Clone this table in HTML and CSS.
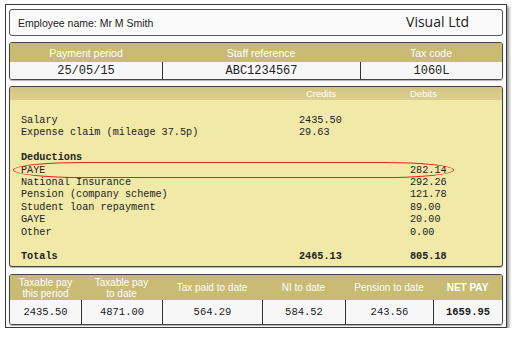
FILE: index.html
```html
<!DOCTYPE html>
<html lang="en">
<head>
    <title>Payslip</title>
    <link rel="stylesheet" href="styles.css">
</head>
<body>
    <div class="slip">
        <div class="s_name">
            <span>Employee name: Mr M Smith</span>
            <span class="s_company">Visual Ltd</span>
        </div>

        <div class="s_box s_info">
            <div class="s_head">Payment period</div>
            <div class="s_head">Staff reference</div>
            <div class="s_head">Tax code</div>
            <div class="s_cell">25/05/15</div>
            <div class="s_cell">ABC1234567</div>
            <div class="s_cell">1060L</div>
        </div>

        <div class="s_box s_main">
            <div class="m_head">
                <span></span>
                <span class="m_credits">Credits</span>
                <span>Debits</span>
            </div>
            <div class="m_body">
                <span>Salary</span><span>2435.50</span><span></span>
                <span>Expense claim (mileage 37.5p)</span><span>29.63</span><span></span>
                <span class="m_blank"></span><span></span><span></span>
                <b>Deductions</b><span></span><span></span>
                <span>PAYE</span><span></span><span>282.14</span>
                <span>National Insurance</span><span></span><span>292.26</span>
                <span>Pension (company scheme)</span><span></span><span>121.78</span>
                <span>Student loan repayment</span><span></span><span>89.00</span>
                <span>GAYE</span><span></span><span>20.00</span>
                <span>Other</span><span></span><span>0.00</span>
                <span class="m_blank"></span><span></span><span></span>
                <b>Totals</b><b>2465.13</b><b>805.18</b>
                <!-- ring round the PAYE line -->
                <div class="m_mark"></div>
            </div>
        </div>

        <div class="s_box s_totals">
            <div class="s_head">Taxable pay<br>this period</div>
            <div class="s_head">Taxable pay<br>to date</div>
            <div class="s_head">Tax paid to date</div>
            <div class="s_head">NI to date</div>
            <div class="s_head">Pension to date</div>
            <div class="s_head t_net">NET PAY</div>
            <div class="s_cell">2435.50</div>
            <div class="s_cell">4871.00</div>
            <div class="s_cell">564.29</div>
            <div class="s_cell">584.52</div>
            <div class="s_cell">243.56</div>
            <div class="s_cell t_net">1659.95</div>
        </div>
    </div>
</body>
</html>
```

FILE: styles.css
```css
body {margin: 0; padding: 0; background: #fff; font-family: "Liberation Sans", Arial, sans-serif; color: #222;}
/* =============================================================== */
.slip {
    width: 502px;
    height: 324px;
    margin: 4px 0 0 5px;
    padding: 4px 3px 2px;
    box-sizing: border-box;
    border: 1px solid #3a3a3a;
    background: #fdfdfd;
    box-shadow: 2px 2px 3px rgba(0, 0, 0, 0.45);
    display: flex;
    flex-direction: column;
}
.s_name {
    height: 27px;
    box-sizing: border-box;
    border: 1px solid #555;
    border-radius: 3px;
    background: #fafafa;
    display: flex;
    align-items: center;
    justify-content: space-between;
    padding: 0 33px 0 8px;
    font-size: 10.5px;
}
.s_company {
    font-size: 14px;
    font-family: "Open Sans", "Liberation Sans", sans-serif;
    margin-top: -3px;
}
.s_box {
    border: 1px solid #444;
    border-radius: 3px;
    overflow: hidden;
    box-shadow: 0 1px 1px rgba(0, 0, 0, 0.3);
}
.s_head {
    background: #c9ba74;
    color: #fff;
    font-size: 10px;
    display: flex;
    align-items: center;
    justify-content: center;
    text-align: center;
}
.s_cell {
    background: #f7f7f7;
    font-family: "Liberation Mono", "Courier New", monospace;
    font-size: 10.5px;
    display: flex;
    align-items: center;
    justify-content: center;
    border-left: 1px solid #333;
}
.s_info .s_cell:nth-child(4),
.s_totals .s_cell:nth-child(7) {
    border-left: none;
}
/* =========================================== */
.s_info {
    margin-top: 6px;
    height: 38px;
    box-sizing: border-box;
    display: grid;
    grid-template-columns: 152px 198px 142px;
    grid-template-rows: 19px 17px;
}
.s_info .s_head {
    font-size: 10.5px;
}
.s_info .s_cell {
    font-size: 12px;
}
/* =========================================== */
.s_main {
    margin-top: 6px;
    height: 181px;
    box-sizing: border-box;
    background: #f1e9a8;
}
.m_head,
.m_body {
    display: grid;
    grid-template-columns: 278px 111px 1fr;
}
.m_head {
    height: 13px;
    padding-left: 11px;
    background: linear-gradient(#d2c483, #ddd08f);
    color: #fff;
    font-size: 9.5px;
    line-height: 13px;
}
.m_credits {
    padding-left: 7px;
}
.m_body {
    position: relative;
    padding: 15px 0 0 11px;
    font-family: "Liberation Mono", "Courier New", monospace;
    font-size: 10.2px;
    line-height: 12.4px;
    white-space: pre;
}
.m_blank {
    height: 12.4px;
}
.m_mark {
    position: absolute;
    left: 3px;
    top: 62px;
    width: 441px;
    height: 16px;
    box-sizing: border-box;
    border: 1.5px solid #e0231f;
    border-radius: 70px / 8px;
}
/* =========================================== */
.s_totals {
    margin-top: 7px;
    height: 51px;
    box-sizing: border-box;
    display: grid;
    grid-template-columns: 71px 81px 100px 83px 88px 69px;
    grid-template-rows: 25px 24px;
}
.s_totals .s_head {
    font-size: 10px;
    line-height: 11px;
}
.t_net {
    font-weight: 700;
}
```
